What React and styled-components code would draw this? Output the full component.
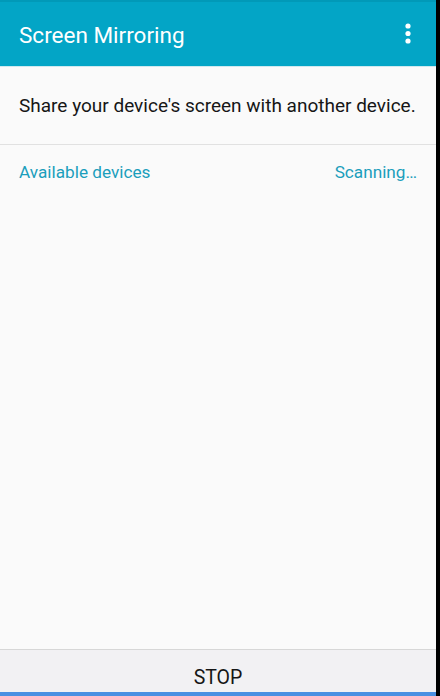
import styled, { createGlobalStyle } from 'styled-components';

const GlobalStyle = createGlobalStyle`
    html, body {
        margin: 0;
        padding: 0;
        background: #000;
    }
    body {
        font-family: Roboto, "Noto Sans", Arial, sans-serif;
    }
`;

const Frame = styled.div`
    display: flex;
    width: 440px;
    height: 696px;
    background: #000;
`;

const Screen = styled.div`
    display: flex;
    flex-direction: column;
    width: 436px;
    height: 696px;
    background: #fafafa;
`;

const Toolbar = styled.header`
    display: flex;
    align-items: center;
    justify-content: space-between;
    height: 64px;
    padding: 0 12px 0 19px;
    background: #03a5c6;
    border-top: 2px solid #0199b8;
    border-bottom: 1px solid #cfe9ef;
`;

const Title = styled.h1`
    margin: 0;
    font-size: 22.5px;
    font-weight: 400;
    color: #fff;
    padding-top: 2px;
`;

const MenuButton = styled.button`
    display: flex;
    align-items: center;
    justify-content: center;
    width: 32px;
    height: 40px;
    padding: 0;
    border: none;
    background: transparent;
`;

const Intro = styled.p`
    margin: 0;
    padding: 27px 19px 0;
    height: 50px;
    font-size: 19px;
    white-space: nowrap;
    color: #161616;
    border-bottom: 1px solid #e1e1e1;
`;

const SectionRow = styled.div`
    display: flex;
    justify-content: space-between;
    padding: 17px 19px 0 19px;
    font-size: 17.2px;
    color: #1b9ebc;
`;

const Spacer = styled.div`
    flex: 1;
`;

const BottomBar = styled.button`
    height: 47px;
    border: none;
    border-top: 1px solid #d7d7d7;
    border-bottom: 4px solid #4a90e2;
    background: #f2f1f3;
    font-family: Roboto, "Noto Sans", Arial, sans-serif;
    font-size: 19.5px;
    color: #161616;
    padding: 12px 0 0;
`;

const MoreIcon = () => (
    <svg width="8" height="24" viewBox="0 0 8 24">
        <circle cx="4" cy="4" r="2.6" fill="#fff" />
        <circle cx="4" cy="11.5" r="2.6" fill="#fff" />
        <circle cx="4" cy="19" r="2.6" fill="#fff" />
    </svg>
);

export default function App() {
    return (
        <>
            <GlobalStyle />
            <Frame>
                <Screen>
                    <Toolbar>
                        <Title>Screen Mirroring</Title>
                        <MenuButton aria-label="More options">
                            <MoreIcon />
                        </MenuButton>
                    </Toolbar>
                    <Intro>Share your device's screen with another device.</Intro>
                    <SectionRow>
                        <span>Available devices</span>
                        <span>Scanning…</span>
                    </SectionRow>
                    <Spacer />
                    <BottomBar>STOP</BottomBar>
                </Screen>
            </Frame>
        </>
    );
}
